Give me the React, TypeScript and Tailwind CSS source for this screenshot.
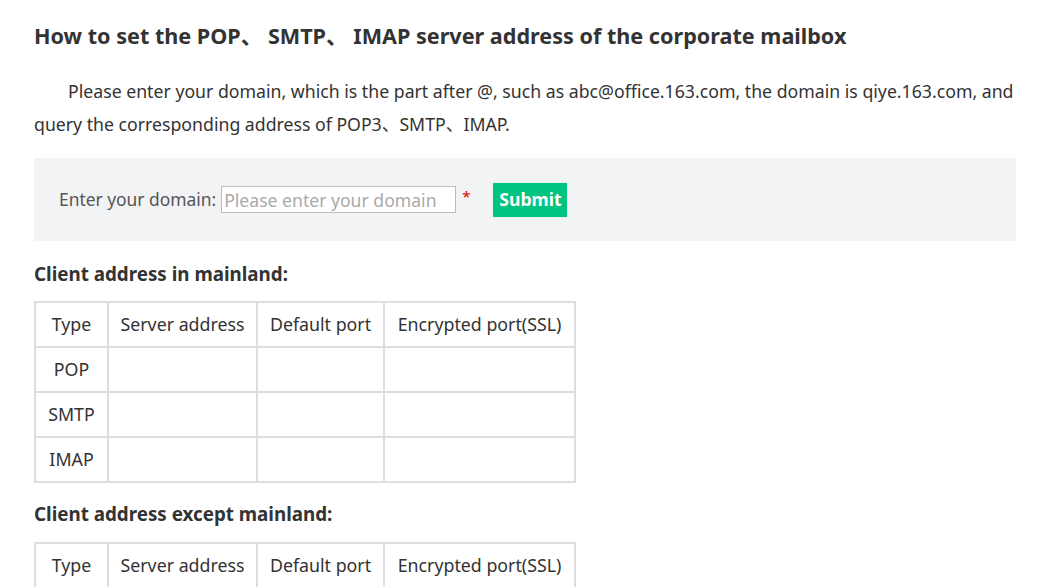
import React from "react";

const font = { fontFamily: '"Noto Sans", "Noto Sans CJK SC", sans-serif' };

function AddrTable({ rows }: { rows: string[] }) {
  const cell = "border-2 border-[#dedede] text-center text-[17.8px] text-[#333] h-[45px] p-0 font-normal";
  return (
    <table className="border-collapse table-fixed w-[540px]">
      <colgroup>
        <col className="w-[73px]" />
        <col className="w-[149px]" />
        <col className="w-[127px]" />
        <col className="w-[191px]" />
      </colgroup>
      <thead>
        <tr>
          <th className={cell}>Type</th>
          <th className={cell}>Server address</th>
          <th className={cell}>Default port</th>
          <th className={cell}>Encrypted port(SSL)</th>
        </tr>
      </thead>
      <tbody>
        {rows.map((r) => (
          <tr key={r}>
            <td className={cell}>{r}</td>
            <td className={cell}></td>
            <td className={cell}></td>
            <td className={cell}></td>
          </tr>
        ))}
      </tbody>
    </table>
  );
}

export default function App() {
  return (
    <div className="bg-white w-[1050px] h-[587px] overflow-hidden text-[#333]" style={font}>
      <div className="px-[34px] pt-[22px] w-[1016px] box-content">
        <h1 className="text-[21.6px] leading-[28px] font-bold text-[#333] whitespace-nowrap">
          How to set the POP、 SMTP、 IMAP server address of the corporate mailbox
        </h1>
        <p className="mt-[25px] text-[17.7px] leading-[33px] indent-[34px] text-[#333] w-[982px]">
          Please enter your domain, which is the part after @, such as abc@office.163.com, the domain is qiye.163.com, and query the corresponding address of POP3、SMTP、IMAP.
        </p>
        <div className="mt-[17px] w-[982px] h-[83px] bg-[#f2f3f5] flex items-center pl-[25px]">
          <span className="text-[17.4px] text-[#555]">Enter your domain:</span>
          <input
            className="ml-[5px] w-[235px] h-[27px] border border-[#bdbdbd] bg-white px-[2px] text-[17.6px] text-[#333] placeholder:text-[#aaa] outline-none"
            placeholder="Please enter your domain"
          />
          <span className="ml-[6px] text-[#e60000] text-[15px] self-start mt-[31px] leading-none">*</span>
          <button className="ml-[23px] w-[74px] h-[34px] bg-[#00c480] text-white text-[17.6px] font-bold">
            Submit
          </button>
        </div>
        <h2 className="mt-[21px] text-[18.8px] leading-[24px] font-bold text-[#333]">Client address in mainland:</h2>
        <div className="mt-[15px]">
          <AddrTable rows={["POP", "SMTP", "IMAP"]} />
        </div>
        <h2 className="mt-[19px] text-[18.8px] leading-[24px] font-bold text-[#333]">Client address except mainland:</h2>
        <div className="mt-[16px]">
          <AddrTable rows={["POP", "SMTP", "IMAP"]} />
        </div>
      </div>
    </div>
  );
}
